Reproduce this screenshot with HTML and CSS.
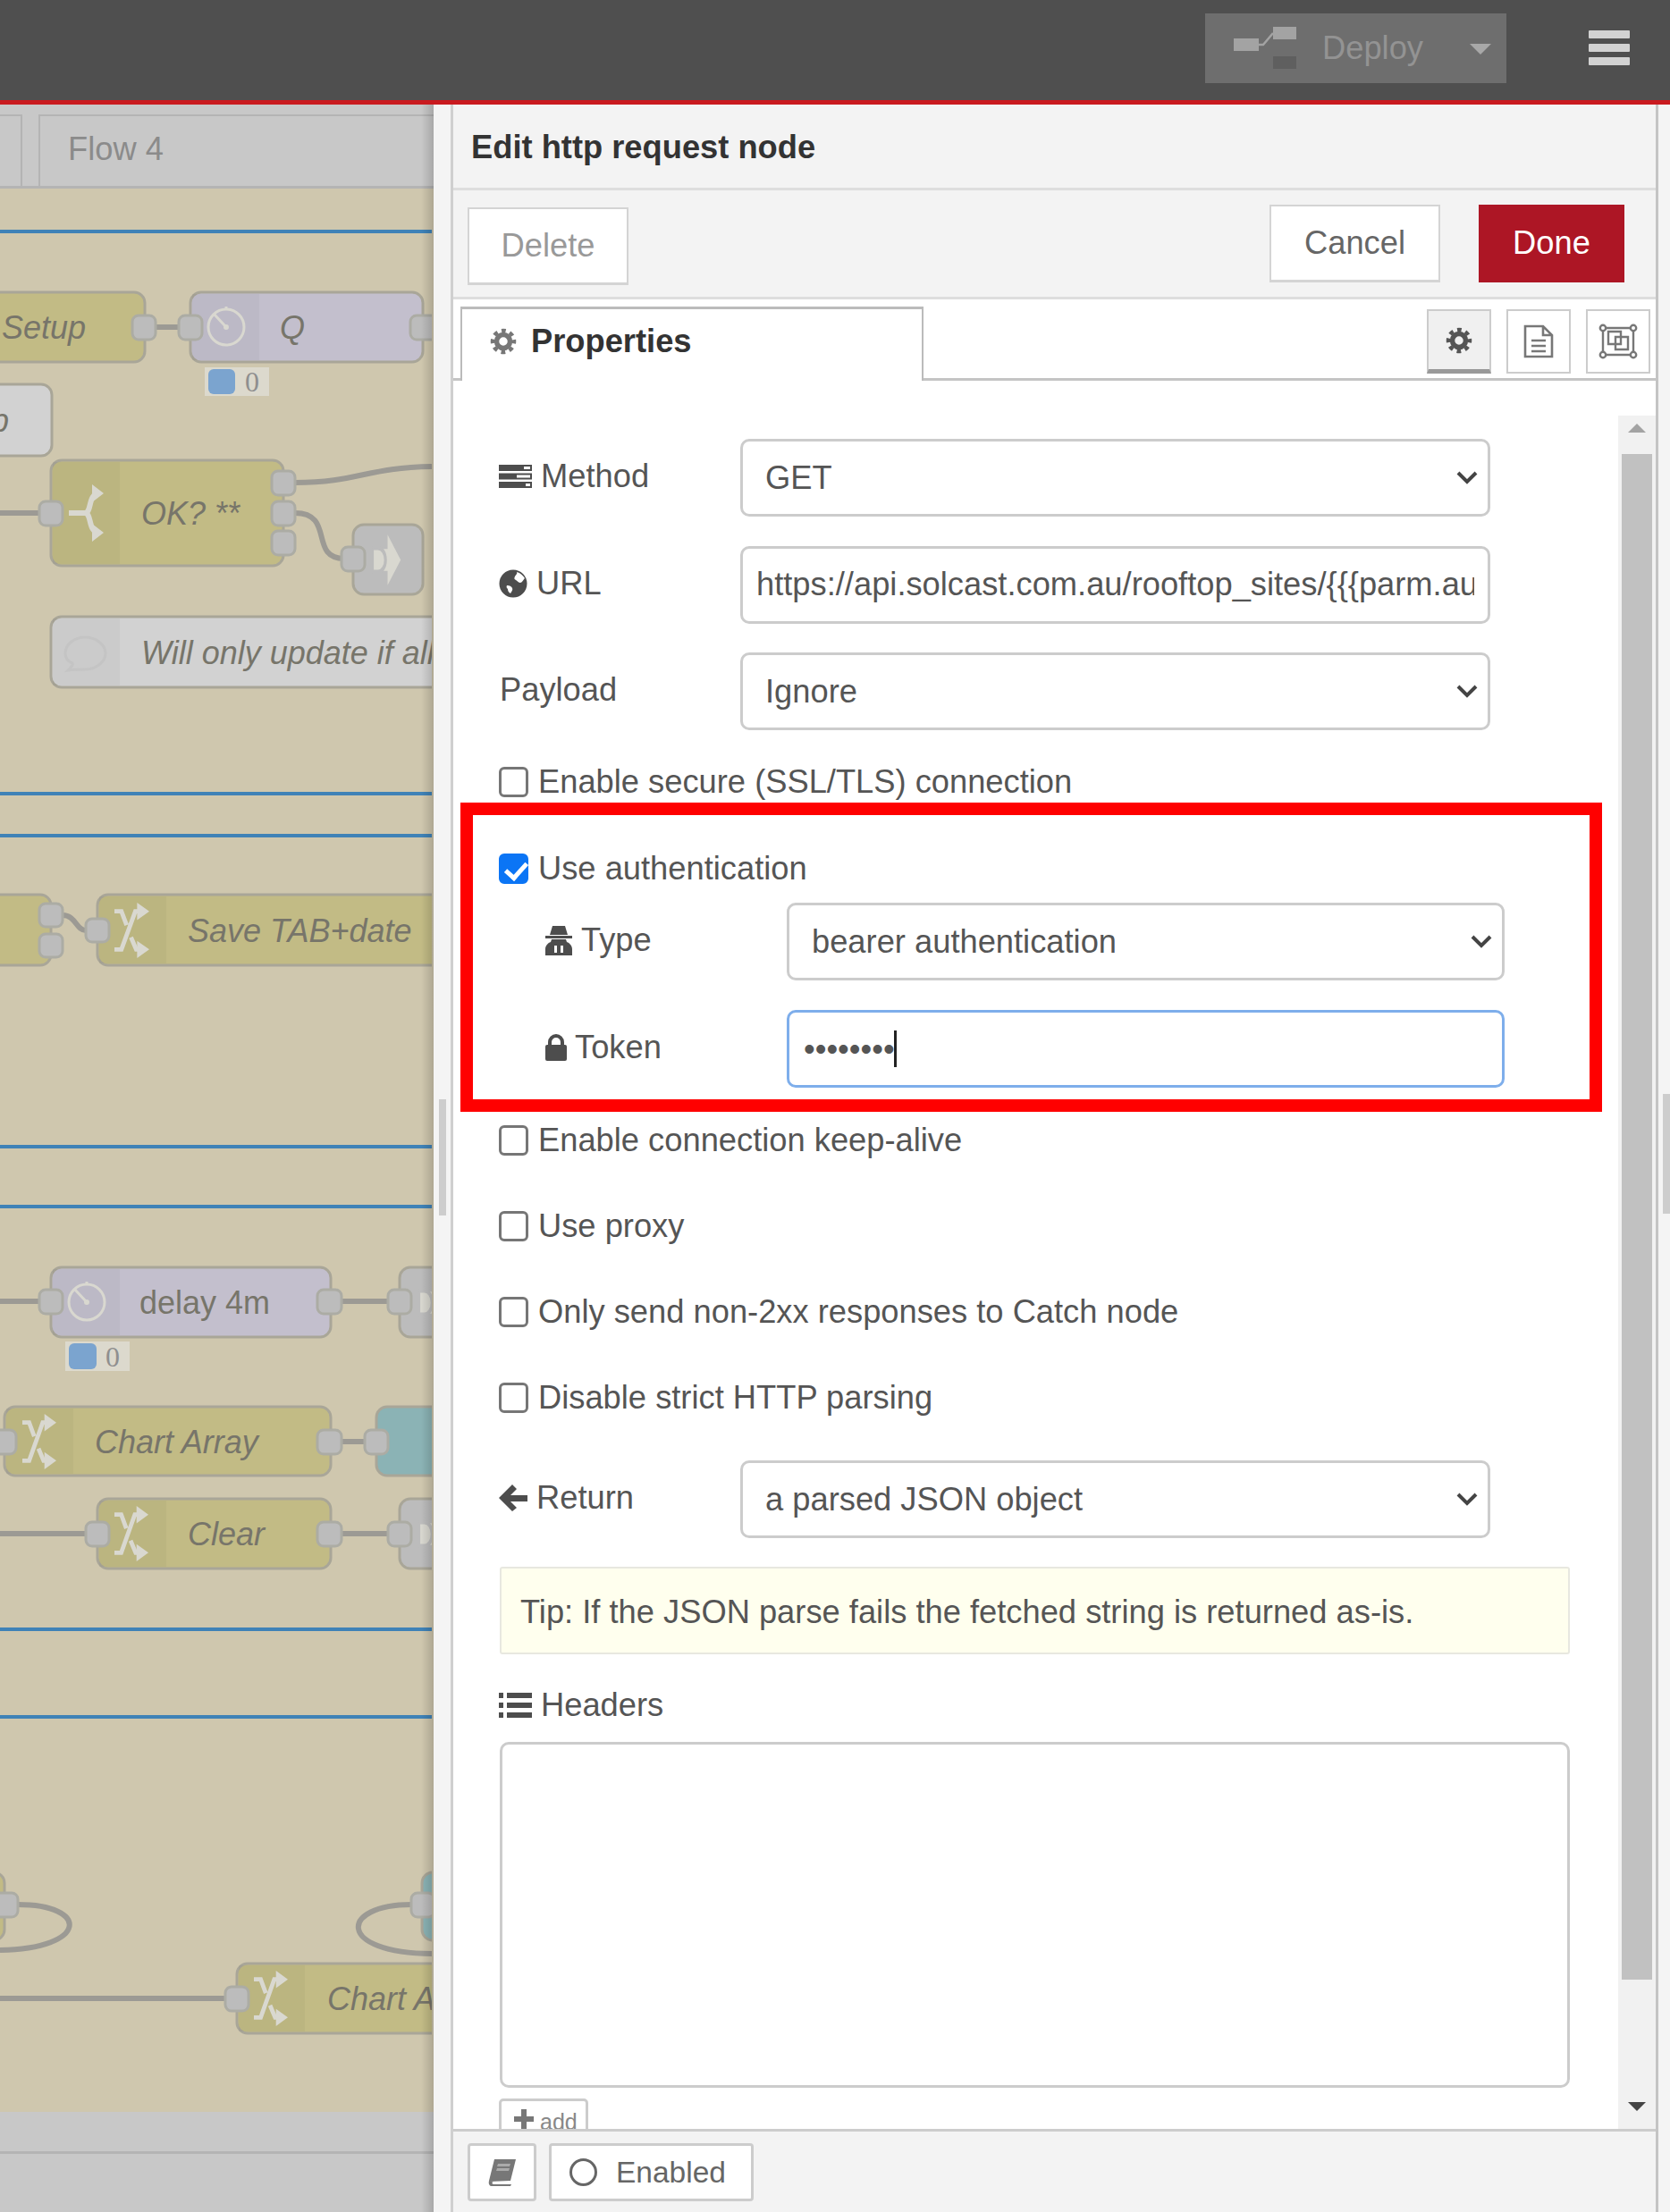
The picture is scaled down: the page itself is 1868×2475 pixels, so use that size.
FILE: index.html
```html
<!DOCTYPE html>
<html lang="en">
<head>
    <meta charset="UTF-8">
    <title>Edit http request node</title>
    <link rel="stylesheet" href="styles.css">
</head>
<body>
    <svg class="defs" width="0" height="0">
        <symbol id="i-shuffle" viewBox="0 0 40 64" preserveAspectRatio="none">
            <path d="M0 54h8L24 10h5M0 10h8l6 16M19 40l6 14h5" fill="none" stroke="currentColor" stroke-width="5"/>
            <path d="M26 0l14 10-14 10zM26 44l14 10-14 10z" fill="currentColor"/>
        </symbol>
        <symbol id="i-clock" viewBox="0 0 48 48">
            <circle cx="24" cy="25" r="20" fill="none" stroke="currentColor" stroke-width="3"/>
            <path d="M10 10l14 15M24 5v-3" fill="none" stroke="currentColor" stroke-width="3"/>
            <circle cx="24" cy="25" r="3" fill="currentColor"/>
        </symbol>
        <symbol id="i-link" viewBox="0 0 44 48" preserveAspectRatio="none">
            <path d="M24 1l19 23-19 23v-13h-20v-20h20z" fill="currentColor"/>
            <path d="M2 13h8a11 11 0 0 1 0 22h-8" fill="none" stroke="#bcbcbc" stroke-width="4"/>
        </symbol>
        <symbol id="i-cog" viewBox="0 0 24 24">
            <circle cx="12" cy="12" r="6" fill="none" stroke="currentColor" stroke-width="4.4"/>
            <circle cx="12" cy="12" r="9.6" fill="none" stroke="currentColor" stroke-width="3.6" stroke-dasharray="3.8 3.74" stroke-dashoffset="1.9"/>
        </symbol>
    </svg>

    <div class="page">
        <header class="topbar">
            <div class="deploy">
                <svg class="deploy-icon" width="70" height="48" viewBox="0 0 70 48">
                    <rect x="0" y="13" width="28" height="14" fill="#a3a3a3"/>
                    <rect x="44" y="0" width="26" height="14" fill="#a3a3a3"/>
                    <rect x="44" y="33" width="26" height="14" fill="#5f5f5f"/>
                    <path d="M28 20h5L44 7" fill="none" stroke="#a3a3a3" stroke-width="2.5"/>
                </svg>
                <span class="deploy-text">Deploy</span>
                <span class="deploy-caret"></span>
            </div>
            <div class="burger"><span></span><span></span><span></span></div>
        </header>

        <main class="main">
            <section class="workspace">
                <div class="ws-tabs">
                    <div class="ws-tab ws-tab-old"></div>
                    <div class="ws-tab">Flow 4</div>
                </div>
                <svg class="canvas" width="483" height="2152" viewBox="0 211 483 2152">
                    <path class="grp" d="M0 259H483M0 888H483M0 935H483M0 1283H483M0 1350H483M0 1823H483M0 1921H483"/>

                    <path class="wire" d="M174 366H200M0 574H44M330 540C400 540 410 523 483 522M330 574C375 574 345 625 385 625"/>
                    <path class="wire" d="M70 1024C85 1024 85 1041 96 1041M0 1456H44M382 1456H434M382 1613H408M0 1716H96M382 1716H434"/>
                    <path class="wire" d="M20 2131C100 2131 100 2180 0 2182M460 2131C380 2131 375 2185 483 2186M0 2236H252"/>

                    <rect class="node yellow" x="-20" y="327" width="182" height="78" rx="12"/>
                    <text class="lbl it" x="2" y="366">Setup</text>
                    <rect class="port" x="148" y="353" width="26" height="27" rx="7"/>

                    <rect class="node purple" x="213" y="327" width="260" height="78" rx="12"/>
                    <rect class="tint" x="215" y="329" width="75" height="74"/>
                    <use href="#i-clock" class="ico" x="229" y="341" width="48" height="48"/>
                    <text class="lbl it" x="313" y="366">Q</text>
                    <rect class="port" x="200" y="353" width="26" height="27" rx="7"/>
                    <rect class="port" x="459" y="353" width="30" height="27" rx="7"/>
                    <rect class="badge" x="229" y="411" width="72" height="32"/>
                    <rect class="dot" x="233" y="413" width="30" height="28" rx="6"/>
                    <text class="count" x="274" y="427">0</text>

                    <rect class="node grey" x="-30" y="430" width="88" height="80" rx="12"/>
                    <text class="lbl it" x="-10" y="470">p</text>

                    <rect class="node yellow" x="57" y="515" width="260" height="118" rx="12"/>
                    <rect class="tint" x="59" y="517" width="75" height="114"/>
                    <path class="ico-s" d="M77 574H95C103 574 98 552 111 552M95 574C103 574 98 596 111 596"/>
                    <path class="ico-f" d="M103 542l13 10-13 10zM103 586l13 10-13 10z"/>
                    <text class="lbl it" x="158" y="574">OK? **</text>
                    <rect class="port" x="44" y="561" width="26" height="27" rx="7"/>
                    <rect class="port" x="304" y="527" width="26" height="27" rx="7"/>
                    <rect class="port" x="304" y="561" width="26" height="27" rx="7"/>
                    <rect class="port" x="304" y="594" width="26" height="27" rx="7"/>

                    <rect class="node dark" x="395" y="587" width="78" height="78" rx="12"/>
                    <use href="#i-link" class="ico" x="415" y="597" width="34" height="59"/>
                    <rect class="port" x="382" y="612" width="26" height="27" rx="7"/>

                    <rect class="node grey" x="57" y="690" width="460" height="79" rx="12"/>
                    <rect class="tint" x="59" y="692" width="75" height="75"/>
                    <path class="ico-o" d="M76 750c4-4 6-6 5-8-5-2-8-6-8-11 0-10 10-18 22-18s23 8 23 18-11 18-23 18c-6 0-13 0-19 1z"/>
                    <text class="lbl it" x="158" y="730">Will only update if all</text>

                    <rect class="node yellow" x="-20" y="1001" width="77" height="79" rx="12"/>
                    <rect class="port" x="44" y="1011" width="26" height="26" rx="7"/>
                    <rect class="port" x="44" y="1045" width="26" height="26" rx="7"/>
                    <rect class="node yellow" x="109" y="1001" width="440" height="79" rx="12"/>
                    <rect class="tint" x="111" y="1003" width="75" height="75"/>
                    <use href="#i-shuffle" class="ico" x="128" y="1010" width="39" height="62"/>
                    <text class="lbl it" x="210" y="1041">Save TAB+date</text>
                    <rect class="port" x="96" y="1028" width="26" height="26" rx="7"/>

                    <rect class="node purple" x="57" y="1418" width="313" height="78" rx="12"/>
                    <rect class="tint" x="59" y="1420" width="75" height="74"/>
                    <use href="#i-clock" class="ico" x="73" y="1432" width="48" height="48"/>
                    <text class="lbl" x="156" y="1457">delay 4m</text>
                    <rect class="port" x="44" y="1443" width="26" height="27" rx="7"/>
                    <rect class="port" x="355" y="1443" width="27" height="27" rx="7"/>
                    <rect class="node dark" x="447" y="1418" width="78" height="78" rx="12"/>
                    <use href="#i-link" class="ico" x="467" y="1428" width="34" height="59"/>
                    <rect class="port" x="434" y="1443" width="26" height="27" rx="7"/>
                    <rect class="badge" x="73" y="1501" width="72" height="33"/>
                    <rect class="dot" x="77" y="1503" width="31" height="29" rx="6"/>
                    <text class="count" x="118" y="1518">0</text>

                    <rect class="node yellow" x="5" y="1574" width="365" height="77" rx="12"/>
                    <rect class="tint" x="7" y="1576" width="75" height="73"/>
                    <use href="#i-shuffle" class="ico" x="25" y="1582" width="38" height="62"/>
                    <text class="lbl it" x="106" y="1613">Chart Array</text>
                    <rect class="port" x="-8" y="1600" width="26" height="27" rx="7"/>
                    <rect class="port" x="355" y="1600" width="27" height="27" rx="7"/>
                    <rect class="node teal" x="421" y="1574" width="90" height="77" rx="12"/>
                    <rect class="port" x="408" y="1600" width="26" height="27" rx="7"/>

                    <rect class="node yellow" x="109" y="1677" width="261" height="78" rx="12"/>
                    <rect class="tint" x="111" y="1679" width="75" height="74"/>
                    <use href="#i-shuffle" class="ico" x="128" y="1685" width="38" height="62"/>
                    <text class="lbl it" x="210" y="1716">Clear</text>
                    <rect class="port" x="96" y="1703" width="26" height="27" rx="7"/>
                    <rect class="port" x="355" y="1703" width="27" height="27" rx="7"/>
                    <rect class="node dark" x="447" y="1677" width="78" height="78" rx="12"/>
                    <use href="#i-link" class="ico" x="467" y="1687" width="34" height="59"/>
                    <rect class="port" x="434" y="1703" width="26" height="27" rx="7"/>

                    <rect class="node yellow" x="-60" y="2095" width="65" height="76" rx="12"/>
                    <rect class="port" x="-6" y="2118" width="26" height="27" rx="7"/>
                    <rect class="node teal" x="472" y="2095" width="60" height="76" rx="12"/>
                    <rect class="port" x="460" y="2118" width="26" height="27" rx="7"/>

                    <rect class="node yellow" x="265" y="2197" width="300" height="78" rx="12"/>
                    <rect class="tint" x="267" y="2199" width="74" height="74"/>
                    <use href="#i-shuffle" class="ico" x="284" y="2205" width="38" height="62"/>
                    <text class="lbl it" x="366" y="2236">Chart Array</text>
                    <rect class="port" x="252" y="2223" width="26" height="27" rx="7"/>
                </svg>
                <div class="ws-foot"></div>
            </section>

            <aside class="tray">
                <div class="tray-strip"><span class="tray-handle"></span></div>
                <div class="panel">
                    <div class="panel-title">Edit http request node</div>
                    <div class="panel-actions">
                        <button class="btn btn-delete">Delete</button>
                        <span class="spacer"></span>
                        <button class="btn">Cancel</button>
                        <button class="btn btn-done">Done</button>
                    </div>
                    <div class="panel-tabs">
                        <div class="tab">
                            <svg class="tab-cog" width="30" height="30"><use href="#i-cog"/></svg>
                            Properties
                        </div>
                        <span class="spacer"></span>
                        <div class="tab-btn active">
                            <svg width="30" height="30"><use href="#i-cog"/></svg>
                        </div>
                        <div class="tab-btn">
                            <svg width="34" height="38" viewBox="0 0 34 38">
                                <path d="M2 2h20l10 10v24H2z M22 2v10h10" fill="none" stroke="#777" stroke-width="2.6"/>
                                <path d="M9 18h16M9 24h16M9 30h16" stroke="#777" stroke-width="2.4"/>
                            </svg>
                        </div>
                        <div class="tab-btn">
                            <svg width="44" height="40" viewBox="0 0 44 40">
                                <path d="M5 5h34v30H5z" fill="none" stroke="#777" stroke-width="2.4"/>
                                <path d="M11 9h14v14H11zM19 15h14v14H19z" fill="none" stroke="#777" stroke-width="2.4"/>
                                <g fill="#fff" stroke="#777" stroke-width="2.4">
                                    <circle cx="5" cy="5" r="3.2"/><circle cx="39" cy="5" r="3.2"/>
                                    <circle cx="5" cy="35" r="3.2"/><circle cx="39" cy="35" r="3.2"/>
                                </g>
                            </svg>
                        </div>
                    </div>

                    <div class="panel-body">
                        <form class="form">
                            <div class="row">
                                <label class="row-label">
                                    <svg class="ico-label" width="37" height="28" viewBox="0 0 37 28">
                                        <path d="M0 1h37v7H0zM0 10.500h37v7H0zM0 20h37v7H0z" fill="#4d4d4d"/>
                                        <path d="M28 3h7v3h-7zM20 12.500h15v3H20zM30 22h5v3h-5z" fill="#fff"/>
                                    </svg>
                                    Method
                                </label>
                                <div class="select-wrap">
                                    <select class="field"><option>GET</option></select>
                                    <svg class="chevron" width="24" height="16" viewBox="0 0 24 16"><path d="M2 3l10 10L22 3" fill="none" stroke="#444" stroke-width="4"/></svg>
                                </div>
                            </div>
                            <div class="row">
                                <label class="row-label">
                                    <svg class="ico-label" width="32" height="32" viewBox="0 0 32 32">
                                        <circle cx="16" cy="16" r="15.500" fill="#4d4d4d"/>
                                        <path d="M20 3c4 1 7 4 9 7-2 2-3 5-5 5-2 0-3-2-5-3-2-1-2-2-1-4 1-2 3-3 2-5zM9 18c3 0 5 1 6 3 1 2-1 4-2 6-2-1-3-3-3-5-1-1-2-2-1-4z" fill="#fff"/>
                                    </svg>
                                    URL
                                </label>
                                <input class="field field-url" type="text" value="https://api.solcast.com.au/rooftop_sites/{{{parm.auth}}}/forecasts" readonly>
                            </div>
                            <div class="row">
                                <label class="row-label label-plain">Payload</label>
                                <div class="select-wrap">
                                    <select class="field"><option>Ignore</option></select>
                                    <svg class="chevron" width="24" height="16" viewBox="0 0 24 16"><path d="M2 3l10 10L22 3" fill="none" stroke="#444" stroke-width="4"/></svg>
                                </div>
                            </div>
                            <label class="check check-ssl"><input type="checkbox">Enable secure (SSL/TLS) connection</label>

                            <div class="auth-box">
                                <label class="check"><input type="checkbox" checked>Use authentication</label>
                                <div class="row row-auth">
                                    <label class="row-label label-auth">
                                        <svg class="ico-label" width="30" height="34" viewBox="0 0 30 34">
                                            <path d="M8 1h14l3 10H5zM0 12h30v3H0z" fill="#4d4d4d"/>
                                            <path d="M7 16h16l1 3c3 1 6 4 6 8v7H0v-7c0-4 3-7 6-8z" fill="#4d4d4d"/>
                                            <path d="M10 23h3v8h-3zM17 23h3v8h-3z" fill="#fff"/>
                                        </svg>
                                        Type
                                    </label>
                                    <div class="select-wrap">
                                        <select class="field"><option>bearer authentication</option></select>
                                        <svg class="chevron" width="24" height="16" viewBox="0 0 24 16"><path d="M2 3l10 10L22 3" fill="none" stroke="#444" stroke-width="4"/></svg>
                                    </div>
                                </div>
                                <div class="row row-auth row-token">
                                    <label class="row-label label-auth label-token">
                                        <svg class="ico-label" width="24" height="30" viewBox="0 0 24 30">
                                            <path d="M5 13V9a7 7 0 0 1 14 0v4" fill="none" stroke="#4d4d4d" stroke-width="4"/>
                                            <rect x="0" y="12" width="24" height="18" rx="2" fill="#4d4d4d"/>
                                        </svg>
                                        Token
                                    </label>
                                    <div class="token-wrap">
                                        <input class="field field-token" type="password" value="12345678" readonly>
                                        <span class="caret"></span>
                                    </div>
                                </div>
                            </div>

                            <label class="check check-keep"><input type="checkbox">Enable connection keep-alive</label>
                            <label class="check check-next"><input type="checkbox">Use proxy</label>
                            <label class="check check-next"><input type="checkbox">Only send non-2xx responses to Catch node</label>
                            <label class="check check-next"><input type="checkbox">Disable strict HTTP parsing</label>

                            <div class="row row-return">
                                <label class="row-label">
                                    <svg class="ico-label" width="32" height="32" viewBox="0 0 32 32"><path d="M15 1l5 5-7 7h19v7H13l7 7-5 4L0 16z" fill="#4d4d4d"/></svg>
                                    Return
                                </label>
                                <div class="select-wrap">
                                    <select class="field"><option>a parsed JSON object</option></select>
                                    <svg class="chevron" width="24" height="16" viewBox="0 0 24 16"><path d="M2 3l10 10L22 3" fill="none" stroke="#444" stroke-width="4"/></svg>
                                </div>
                            </div>
                            <div class="tip">Tip: If the JSON parse fails the fetched string is returned as-is.</div>
                            <label class="row-label headers-label">
                                <svg class="ico-label" width="37" height="30" viewBox="0 0 37 30">
                                    <path d="M0 1h5v6H0zM9 1h28v6H9zM0 12h5v6H0zM9 12h28v6H9zM0 23h5v6H0zM9 23h28v6H9z" fill="#4d4d4d"/>
                                </svg>
                                Headers
                            </label>
                            <div class="headers-box"></div>
                            <button class="btn-add" type="button">
                                <svg width="22" height="22" viewBox="0 0 22 22"><path d="M8 0h6v8h8v6h-8v8H8v-8H0V8h8z" fill="#777"/></svg>
                                add
                            </button>
                        </form>
                        <div class="scrollbar">
                            <span class="arrow arrow-up"></span>
                            <span class="thumb"></span>
                            <span class="arrow arrow-down"></span>
                        </div>
                    </div>

                    <footer class="panel-foot">
                        <button class="btn-foot btn-book">
                            <svg width="32" height="32" viewBox="0 0 32 32">
                                <path d="M7 1h24l-6 24H1z" fill="#777"/>
                                <path d="M1 25c-1 4 1 6 3 6h21l1-2H6c-2 0-2-3 0-3h19z" fill="#777"/>
                                <path d="M11 6h14l-1 3H10zM10 11h14l-1 3H9z" fill="#aaa"/>
                            </svg>
                        </button>
                        <button class="btn-foot btn-enabled"><span class="ring"></span>Enabled</button>
                    </footer>
                </div>
                <div class="tray-right"><span class="tray-right-handle"></span></div>
            </aside>
        </main>
    </div>
</body>
</html>
```

FILE: styles.css
```css
* {
    box-sizing: border-box;
}

body {
    margin: 0;
    width: 1868px;
    height: 2475px;
    overflow: hidden;
    font-family: "Liberation Sans", Arial, sans-serif;
    font-size: 36.3px;
    color: #555;
    background-color: #fff;
}

.defs {
    position: absolute;
}

.page {
    display: flex;
    flex-direction: column;
    height: 2475px;
}

/* top bar */
.topbar {
    flex: none;
    height: 117px;
    background-color: #4f4f4f;
    border-bottom: 5px solid #c91a1f;
    display: flex;
    justify-content: flex-end;
    padding-top: 15px;
    padding-right: 45px;
}

.deploy {
    width: 337px;
    height: 78px;
    background-color: #6e6e6e;
    display: flex;
    align-items: center;
    padding-left: 32px;
    margin-right: 92px;
}

.deploy-text {
    margin-left: 29px;
    color: #939393;
}

.deploy-caret {
    margin-left: 52px;
    margin-top: 2px;
    border-left: 12px solid transparent;
    border-right: 12px solid transparent;
    border-top: 12px solid #a8a8a8;
}

.burger {
    width: 46px;
    display: flex;
    flex-direction: column;
    gap: 6px;
    padding-top: 19px;
}

.burger span {
    height: 9px;
    background-color: #d2d2d2;
    border-radius: 1px;
}

.main {
    flex: 1;
    display: flex;
    min-height: 0;
}

/* workspace behind the tray */
.workspace {
    flex: none;
    width: 485px;
    display: flex;
    flex-direction: column;
    background-color: #cfc7ae;
    position: relative;
    overflow: hidden;
}

.workspace::after {
    content: "";
    position: absolute;
    top: 0;
    bottom: 0;
    right: 0;
    width: 14px;
    background: linear-gradient(to right, rgba(0, 0, 0, 0), rgba(0, 0, 0, 0.16));
}

.ws-tabs {
    flex: none;
    height: 94px;
    background-color: #c8c8c8;
    border-bottom: 3px solid #b4b4b4;
    display: flex;
    align-items: flex-end;
    gap: 18px;
}

.ws-tab {
    flex: 1;
    height: 80px;
    border: 2px solid #b4b4b4;
    border-bottom: none;
    padding-left: 31px;
    padding-top: 16px;
    margin-right: -8px;
    color: #8b8b8b;
}

.ws-tab-old {
    flex: none;
    width: 25px;
    border-left: none;
    margin-right: 0;
    padding: 0;
}

.canvas {
    display: block;
    flex: none;
}

.ws-foot {
    flex: 1;
    background-color: #c8c8c8;
    background-image: linear-gradient(#b4b4b4, #b4b4b4);
    background-size: 100% 3px;
    background-position: 0 44px;
    background-repeat: no-repeat;
}

.grp {
    fill: none;
    stroke: #3f82b7;
    stroke-width: 4;
}

.wire {
    fill: none;
    stroke: #9c9a94;
    stroke-width: 6;
}

.node {
    stroke: #a9a698;
    stroke-width: 3;
}

.yellow {
    fill: #c2bb85;
}

.purple {
    fill: #c3bfcd;
}

.grey {
    fill: #d2d2d2;
}

.dark {
    fill: #bcbcbc;
}

.teal {
    fill: #8bb3b5;
}

.tint {
    fill: rgba(0, 0, 0, 0.03);
    stroke: none;
}

.port {
    fill: #bcbcbc;
    stroke: #acaca4;
    stroke-width: 3;
}

.lbl {
    font-size: 36px;
    fill: #77756a;
    dominant-baseline: central;
}

.it {
    font-style: italic;
}

.ico {
    color: #d9d8d0;
}

.ico-s {
    fill: none;
    stroke: #d9d8d0;
    stroke-width: 6;
}

.ico-f {
    fill: #d9d8d0;
}

.ico-o {
    fill: none;
    stroke: #c4c4c4;
    stroke-width: 3;
}

.badge {
    fill: #dcd9cd;
}

.dot {
    fill: #7ba4cf;
}

.count {
    font-family: "Liberation Serif", serif;
    font-size: 32px;
    fill: #8f8f8f;
    dominant-baseline: central;
}

/* tray */
.tray {
    flex: 1;
    display: flex;
    min-width: 0;
}

.tray-strip {
    flex: none;
    width: 19px;
    background-color: #f4f4f4;
    position: relative;
}

.tray-handle {
    position: absolute;
    left: 6px;
    top: 1113px;
    width: 8px;
    height: 130px;
    background-color: #cdcdcd;
}

.tray-right {
    flex: 1;
    background-color: #f4f4f4;
    position: relative;
}

.tray-right-handle {
    position: absolute;
    left: 5px;
    top: 1107px;
    width: 8px;
    height: 134px;
    background-color: #cdcdcd;
}

.panel {
    flex: none;
    width: 1351px;
    display: flex;
    flex-direction: column;
    background-color: #fff;
    border-left: 3px solid #cfcfcf;
    border-right: 3px solid #c4c4c4;
}

.panel-title {
    flex: none;
    height: 96px;
    background-color: #f3f3f3;
    border-bottom: 3px solid #ddd;
    padding-left: 20px;
    padding-top: 27px;
    font-weight: bold;
    color: #333;
}

.panel-actions {
    flex: none;
    height: 122px;
    background-color: #f3f3f3;
    border-bottom: 3px solid #ddd;
    display: flex;
    align-items: flex-start;
    padding-top: 16px;
    padding-left: 16px;
    padding-right: 35px;
}

.spacer {
    flex: 1;
}

.btn {
    width: 191px;
    height: 87px;
    font: inherit;
    color: #666;
    background-color: #fff;
    border: 2px solid #d4d4d4;
    border-bottom-width: 3px;
    padding: 0;
}

.btn-delete {
    width: 180px;
    margin-top: 3px;
    color: #999;
}

.btn-done {
    width: 163px;
    margin-left: 43px;
    background-color: #ad1625;
    border-color: #ad1625;
    color: #fff;
}

.panel-tabs {
    flex: none;
    height: 91px;
    display: flex;
    align-items: flex-start;
    border-bottom: 3px solid #c4c4c4;
    padding-left: 8px;
    padding-right: 6px;
    gap: 17px;
}

.tab {
    width: 518px;
    height: 83px;
    margin-top: 8px;
    background-color: #fff;
    border: 2px solid #bbb;
    border-top-width: 3px;
    border-bottom: none;
    display: flex;
    align-items: center;
    padding-left: 31px;
    padding-bottom: 9px;
    gap: 16px;
    font-weight: bold;
    color: #333;
}

.tab-cog {
    color: #777;
}

.tab-btn {
    width: 72px;
    height: 72px;
    margin-top: 11px;
    border: 2px solid #ccc;
    display: flex;
    align-items: center;
    justify-content: center;
}

.tab-btn.active {
    background-color: #f0f0f0;
    border-bottom: 5px solid #999;
    color: #555;
}

.panel-body {
    flex: 1;
    display: flex;
    min-height: 0;
}

.form {
    flex: 1;
    min-width: 0;
    overflow: hidden;
    padding-top: 65px;
    padding-left: 51px;
}

.scrollbar {
    flex: none;
    width: 42px;
    margin-top: 39px;
    background-color: #f1f1f1;
    display: flex;
    flex-direction: column;
    align-items: center;
    padding-bottom: 20px;
}

.thumb {
    flex: 1;
    width: 34px;
    background-color: #c1c1c1;
}

.arrow {
    flex: none;
    border-left: 10px solid transparent;
    border-right: 10px solid transparent;
}

.arrow-up {
    margin-top: 9px;
    margin-bottom: 24px;
    border-bottom: 10px solid #a3a3a3;
}

.arrow-down {
    margin-top: 137px;
    border-top: 10px solid #444;
}

.row {
    display: flex;
    align-items: center;
    height: 87px;
    margin-bottom: 32.500px;
}

.row-label {
    flex: none;
    width: 270px;
    display: flex;
    align-items: center;
    gap: 10px;
    margin-top: -3px;
}

.label-plain {
    padding-left: 1px;
}

.ico-label {
    flex: none;
}

.select-wrap {
    flex: none;
    position: relative;
    width: 838.500px;
    height: 87px;
}

.field {
    display: block;
    width: 838.500px;
    height: 87px;
    font: inherit;
    color: #555;
    background-color: #fff;
    border: 3px solid #ccc;
    border-radius: 10px;
    outline: none;
    padding: 0 25px;
    appearance: none;
}

.field-url {
    flex: none;
    padding: 0 15px;
}

.chevron {
    position: absolute;
    top: 35px;
    right: 14px;
    pointer-events: none;
}

.check {
    display: flex;
    align-items: center;
    height: 34px;
    gap: 11px;
}

.check input {
    flex: none;
    appearance: none;
    width: 33px;
    height: 34px;
    margin: 0;
    border: 3px solid #767676;
    border-radius: 6px;
    background-color: #fff;
    position: relative;
}

.check input:checked {
    background-color: #0b75f5;
    border-color: #0b75f5;
}

.check input:checked::after {
    content: "";
    position: absolute;
    left: 9px;
    top: 2px;
    width: 10px;
    height: 19px;
    border: solid #fff;
    border-width: 0 5px 5px 0;
    transform: rotate(42deg);
}

.check-ssl {
    margin-top: 41px;
    margin-bottom: 6px;
}

.auth-box {
    width: 1277px;
    height: 345.500px;
    margin-left: -43px;
    border: 14px solid #f00;
    padding: 43px 0 0 29px;
}

.row-auth {
    margin-top: 21px;
    margin-bottom: 0;
}

.row-token {
    margin-top: 33px;
}

.label-auth {
    width: 322px;
    padding-left: 52px;
}

.label-token {
    gap: 9px;
}

.row-auth .select-wrap,
.row-auth .field {
    width: 802.500px;
}

.token-wrap {
    flex: none;
    position: relative;
    width: 802.500px;
    height: 87px;
}

.field-token {
    border-color: #7eaeeb;
    padding: 0 16px;
}

.caret {
    position: absolute;
    left: 120px;
    top: 23px;
    width: 3px;
    height: 41px;
    background-color: #222;
}

.check-keep {
    margin-top: 15.500px;
}

.check-next {
    margin-top: 62px;
}

.row-return {
    margin-top: 53px;
    margin-bottom: 32px;
}

.tip {
    width: 1197px;
    height: 98px;
    background-color: #ffffee;
    border: 2px solid #e8e8e0;
    border-radius: 3px;
    margin-left: 1px;
    padding: 28px 0 0 21px;
}

.headers-label {
    margin-top: 40px;
    height: 34px;
    width: auto;
}

.headers-box {
    width: 1197px;
    height: 387px;
    margin-top: 24px;
    margin-left: 1px;
    border: 3px solid #ccc;
    border-radius: 10px;
}

.btn-add {
    display: flex;
    align-items: flex-start;
    gap: 7px;
    width: 100px;
    height: 60px;
    margin-top: 12px;
    margin-left: 0;
    padding: 9px 0 0 14px;
    font: inherit;
    font-size: 25px;
    color: #888;
    background-color: #fff;
    border: 3px solid #ccc;
    border-radius: 5px;
}

.panel-foot {
    flex: none;
    height: 93px;
    background-color: #f3f3f3;
    border-top: 3px solid #ccc;
    display: flex;
    gap: 14px;
    padding-top: 13px;
    padding-left: 16px;
}

.btn-foot {
    height: 65px;
    font: inherit;
    color: #666;
    background-color: #fff;
    border: 3px solid #ccc;
    border-radius: 4px;
    display: flex;
    align-items: center;
    justify-content: center;
    padding: 0;
}

.btn-book {
    width: 77px;
}

.btn-enabled {
    width: 229px;
    justify-content: flex-start;
    padding-left: 20px;
    gap: 21px;
    font-size: 33.500px;
}

.ring {
    width: 31px;
    height: 31px;
    border: 3px solid #666;
    border-radius: 50%;
}
```
